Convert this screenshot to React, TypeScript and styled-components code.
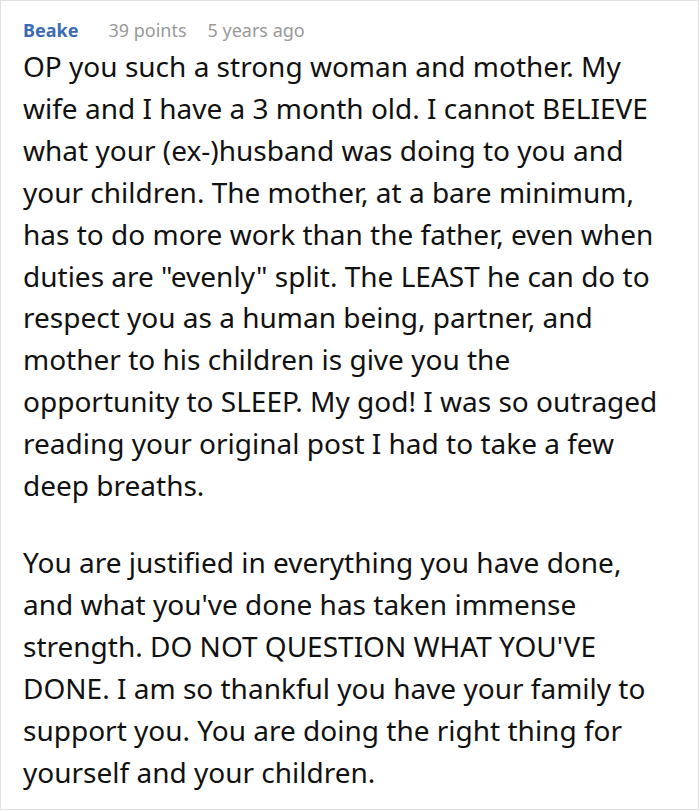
import React from "react";
import styled, { createGlobalStyle } from "styled-components";

const Global = createGlobalStyle`
  html, body { margin: 0; padding: 0; background: #fff; }
  body { font-family: "Noto Sans", "Open Sans", sans-serif; }
`;

const Card = styled.div`
  box-sizing: border-box;
  width: 699px;
  height: 810px;
  border: 1px solid #e2e2e2;
  padding: 16px 10px 0 22px;
  overflow: hidden;
`;

const Meta = styled.div`
  display: flex;
  align-items: baseline;
  font-size: 18px;
  line-height: 26px;
`;

const Author = styled.span`
  color: #3a6bb5;
  font-weight: 700;
  margin-right: 30px;
`;

const MetaItem = styled.span`
  color: #999;
  margin-right: 21px;
`;

const Body = styled.div`
  margin-top: 3px;
  color: #111;
  font-size: 28px;
  line-height: 41.9px;
`;

const Para = styled.p`
  margin: 0 0 35px 0;
`;

const Line = styled.span`
  display: block;
  white-space: nowrap;
`;

const paragraphs: string[][] = [
  [
    "OP you such a strong woman and mother. My",
    "wife and I have a 3 month old. I cannot BELIEVE",
    "what your (ex-)husband was doing to you and",
    "your children. The mother, at a bare minimum,",
    "has to do more work than the father, even when",
    'duties are "evenly" split. The LEAST he can do to',
    "respect you as a human being, partner, and",
    "mother to his children is give you the",
    "opportunity to SLEEP. My god! I was so outraged",
    "reading your original post I had to take a few",
    "deep breaths.",
  ],
  [
    "You are justified in everything you have done,",
    "and what you've done has taken immense",
    "strength. DO NOT QUESTION WHAT YOU'VE",
    "DONE. I am so thankful you have your family to",
    "support you. You are doing the right thing for",
    "yourself and your children.",
  ],
];

export default function App() {
  return (
    <>
      <Global />
      <Card>
        <Meta>
          <Author>Beake</Author>
          <MetaItem>39 points</MetaItem>
          <MetaItem>5 years ago</MetaItem>
        </Meta>
        <Body>
          {paragraphs.map((lines, i) => (
            <Para key={i}>
              {lines.map((l, j) => (
                <Line key={j}>{l}</Line>
              ))}
            </Para>
          ))}
        </Body>
      </Card>
    </>
  );
}
